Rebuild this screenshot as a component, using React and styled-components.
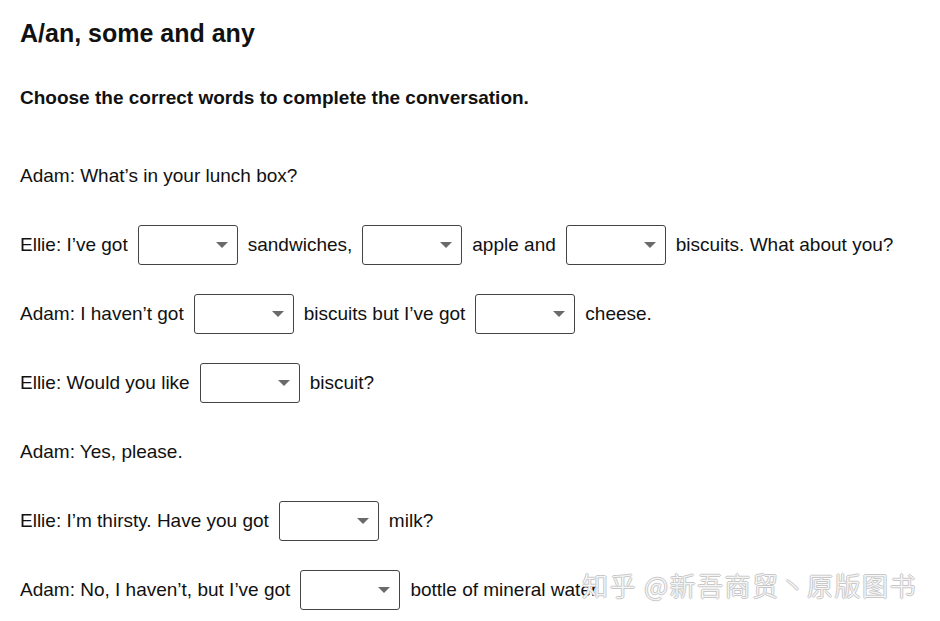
import React from 'react';
import styled, { createGlobalStyle } from 'styled-components';

const GlobalStyle = createGlobalStyle`
  html, body {
    margin: 0;
    padding: 0;
    background: #ffffff;
  }
  body {
    font-family: "Liberation Sans", Arial, sans-serif;
    color: #111111;
  }
`;

const Page = styled.div`
  position: relative;
  width: 940px;
  height: 621px;
  overflow: hidden;
  padding: 17px 20px 0;
  box-sizing: border-box;
`;

const Title = styled.h1`
  margin: 0;
  font-size: 25px;
  font-weight: 700;
  line-height: 32px;
`;

const Instruction = styled.p`
  margin: 38px 0 0;
  font-size: 19px;
  font-weight: 700;
  line-height: 22px;
`;

const Conversation = styled.div`
  display: flex;
  flex-direction: column;
  gap: 29px;
  margin-top: 47px;
`;

const Line = styled.div`
  display: flex;
  align-items: center;
  gap: 10px;
  height: 40px;
  font-size: 19px;
  white-space: nowrap;
`;

const Select = styled.div`
  position: relative;
  flex: none;
  width: 100px;
  height: 40px;
  box-sizing: border-box;
  border: 1px solid #444444;
  border-radius: 3px;
  background: #ffffff;
  &::after {
    content: '';
    position: absolute;
    right: 9px;
    top: 16px;
    border-left: 6px solid transparent;
    border-right: 6px solid transparent;
    border-top: 6px solid #6a6a6a;
  }
`;

const Watermark = styled.div`
  position: absolute;
  left: 582px;
  top: 566px;
  font-family: "Noto Sans CJK SC", sans-serif;
  font-size: 26px;
  font-weight: 300;
  letter-spacing: 1.5px;
  color: #f6f6f6;
  text-shadow: 1px 0 0 #c8c8c8, -1px 0 0 #c8c8c8, 0 1px 0 #c8c8c8, 0 -1px 0 #c8c8c8;
  white-space: nowrap;
`;

const lines = [
  ['Adam: What\u2019s in your lunch box?'],
  ['Ellie: I\u2019ve got', null, 'sandwiches,', null, 'apple and', null, 'biscuits. What about you?'],
  ['Adam: I haven\u2019t got', null, 'biscuits but I\u2019ve got', null, 'cheese.'],
  ['Ellie: Would you like', null, 'biscuit?'],
  ['Adam: Yes, please.'],
  ['Ellie: I\u2019m thirsty. Have you got', null, 'milk?'],
  ['Adam: No, I haven\u2019t, but I\u2019ve got', null, 'bottle of mineral water.'],
];

export default function App() {
  return (
    <Page>
      <GlobalStyle />
      <Title>A/an, some and any</Title>
      <Instruction>Choose the correct words to complete the conversation.</Instruction>
      <Conversation>
        {lines.map((parts, i) => (
          <Line key={i}>
            {parts.map((p, j) => (p === null ? <Select key={j} /> : <span key={j}>{p}</span>))}
          </Line>
        ))}
      </Conversation>
      <Watermark>知乎 @新吾商贸丶原版图书</Watermark>
    </Page>
  );
}
